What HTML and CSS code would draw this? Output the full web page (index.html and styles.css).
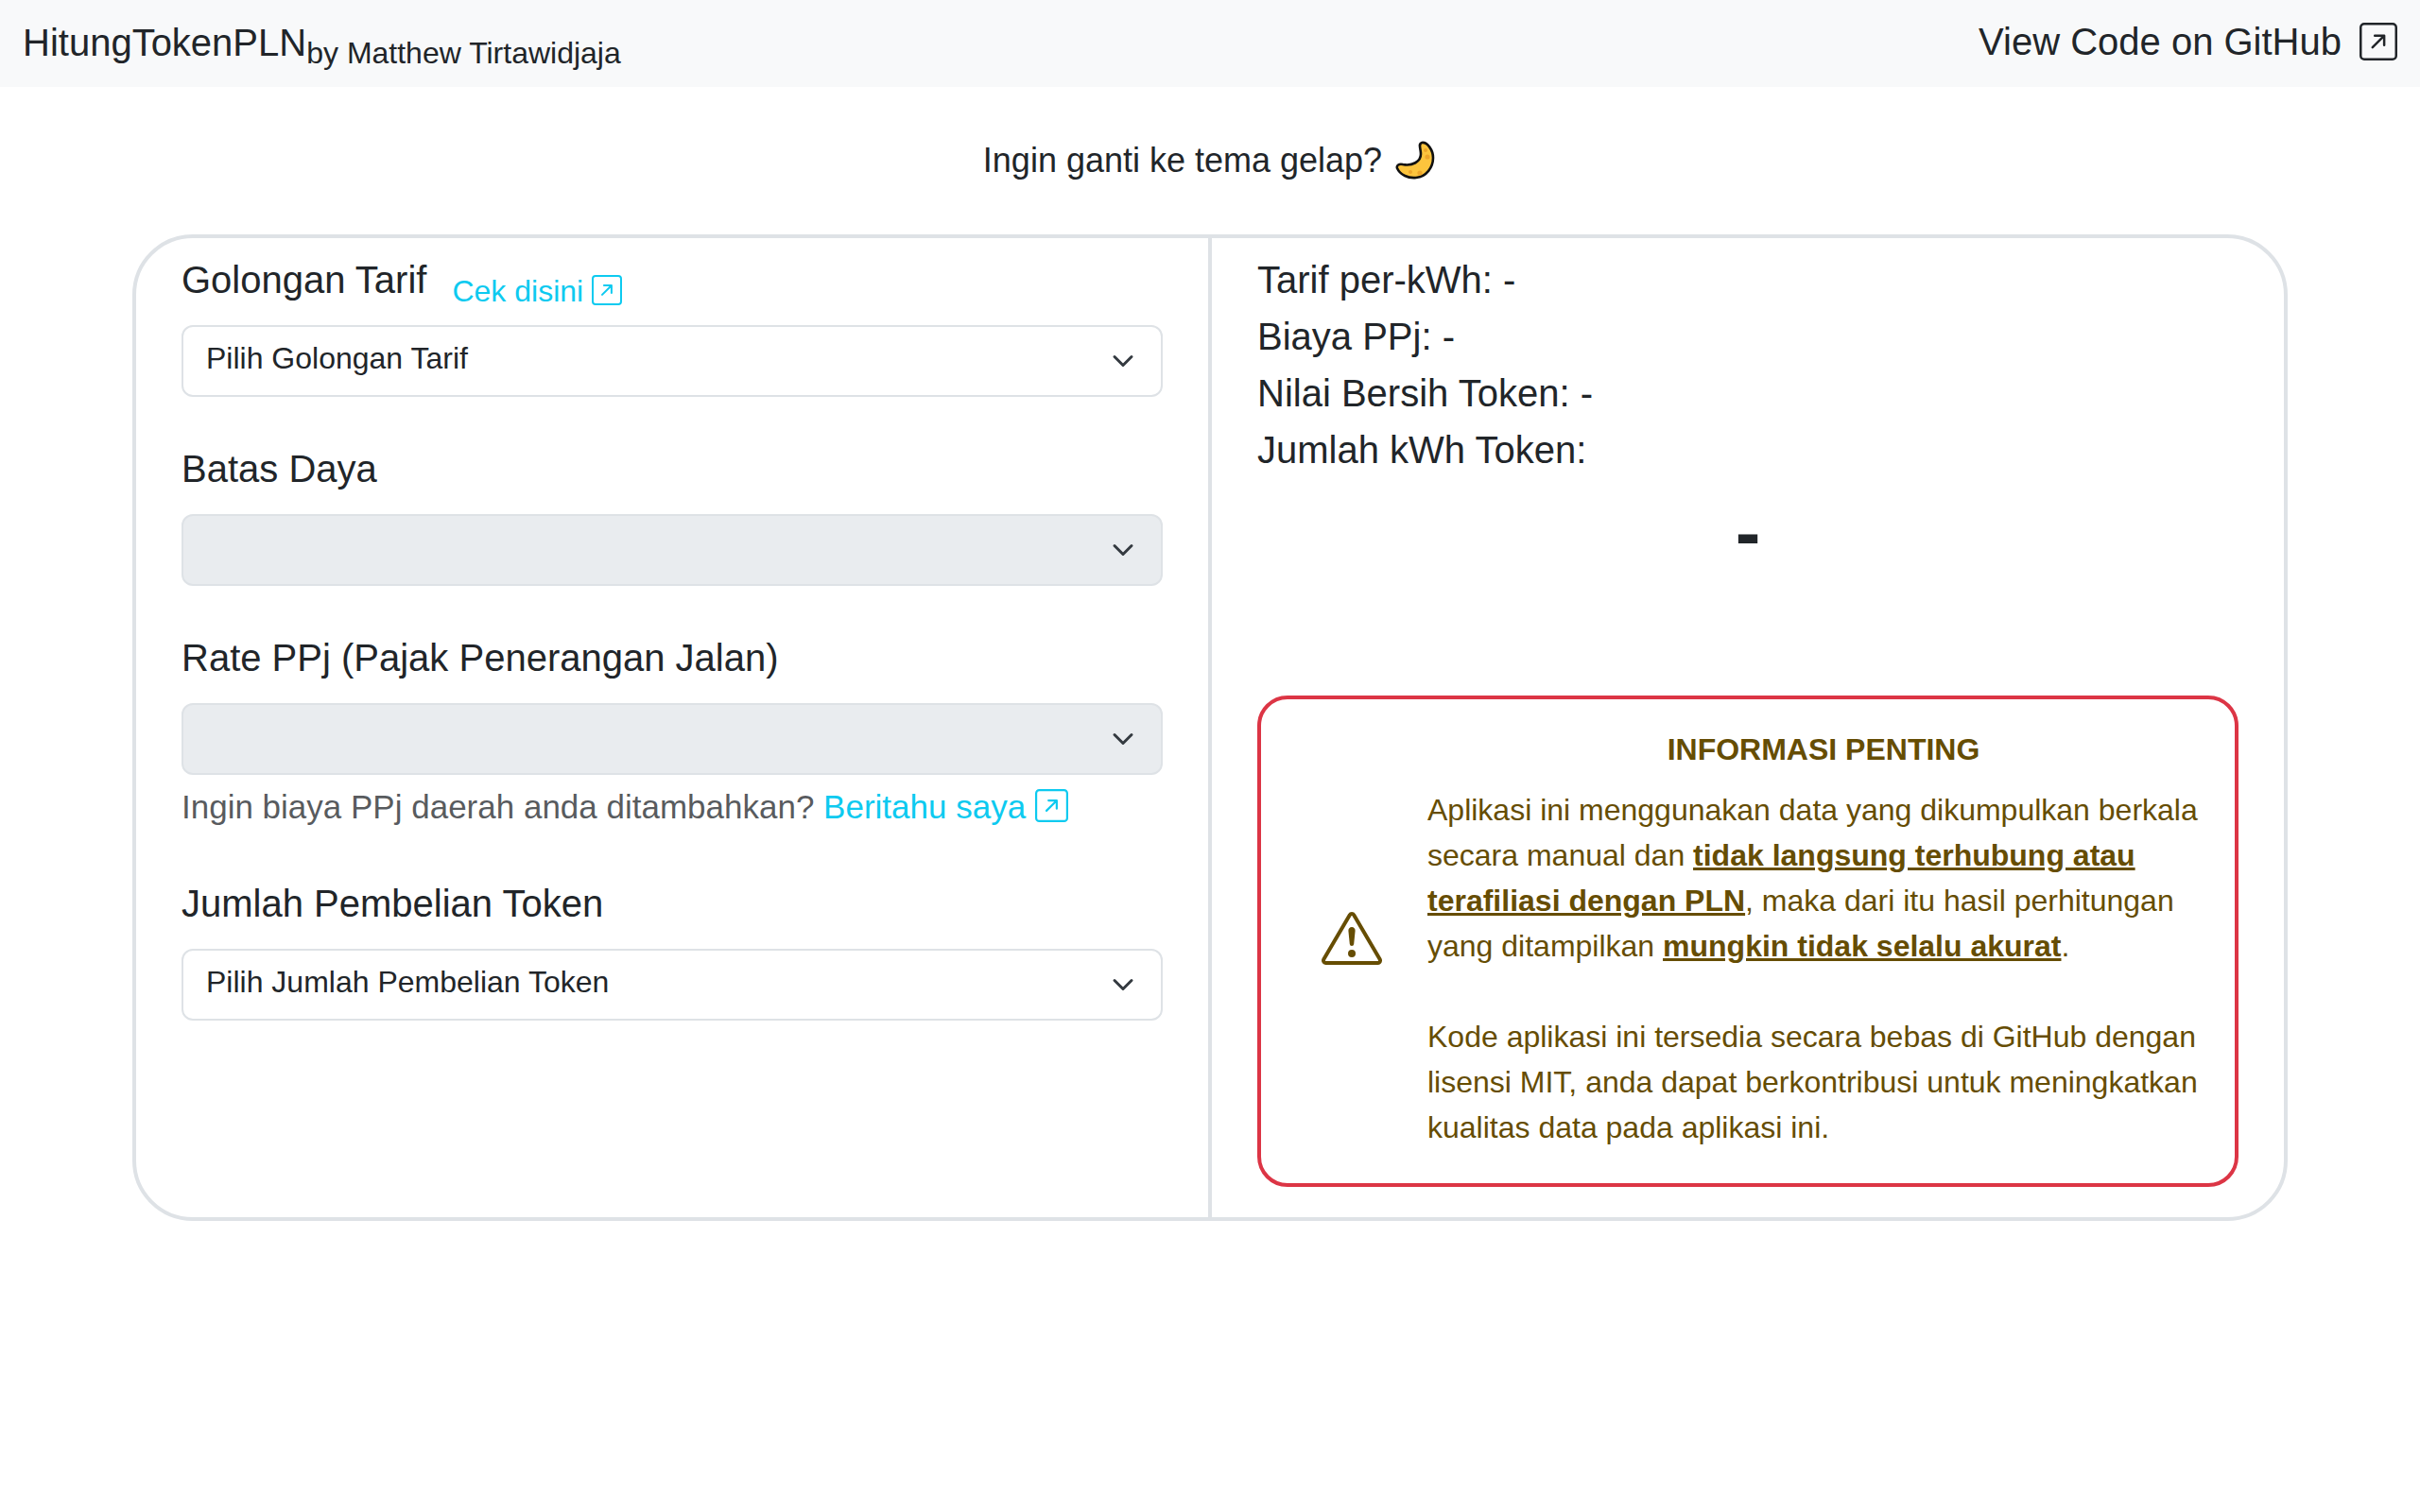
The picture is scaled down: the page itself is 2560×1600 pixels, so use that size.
FILE: index.html
```html
<!DOCTYPE html>
<html lang="id">
<head>
    <meta charset="UTF-8">
    <meta name="viewport" content="width=device-width, initial-scale=1.0">
    <title>HitungTokenPLN</title>
    <link rel="stylesheet" href="styles.css">
</head>
<body>
    <nav class="navbar">
        <div class="brand">HitungTokenPLN<small class="brand-by">by Matthew Tirtawidjaja</small></div>
        <a class="repo-link" href="#"><span class="repo-text">View Code on GitHub</span>
            <svg class="repo-icon" viewBox="0 0 16 16" fill="currentColor"><path fill-rule="evenodd" d="M15 2a1 1 0 0 0-1-1H2a1 1 0 0 0-1 1v12a1 1 0 0 0 1 1h12a1 1 0 0 0 1-1V2zM0 2a2 2 0 0 1 2-2h12a2 2 0 0 1 2 2v12a2 2 0 0 1-2 2H2a2 2 0 0 1-2-2V2zm5.854 8.803a.5.5 0 1 1-.708-.707L9.243 6H6.475a.5.5 0 1 1 0-1h3.975a.5.5 0 0 1 .5.5v3.975a.5.5 0 1 1-1 0V6.707l-4.096 4.096z"/></svg>
        </a>
    </nav>

    <p class="theme-toggle">Ingin ganti ke tema gelap?
        <svg class="moon" viewBox="0 0 42 42"><path d="M28 2C24 3 27 8 27 14C27 22 18 27 8 25C4 24 1 26 2 29C5 36 14 40 22 39C33 38 40 28 40 18C40 10 34 1 28 2Z" fill="#fcc43d" stroke="#111" stroke-width="2.6" stroke-linejoin="round"/><circle cx="32" cy="10" r="2" fill="#eda52a"/><circle cx="34" cy="17" r="2.6" fill="#eda52a"/><circle cx="16" cy="33" r="2" fill="#eda52a"/><circle cx="26" cy="34" r="2.6" fill="#eda52a"/></svg>
    </p>

    <main class="calc">
        <section class="calc-form">
            <div class="field">
                <div class="label-row">
                    <label class="field-label">Golongan Tarif</label>
                    <a class="ext-link" href="#">Cek disini
                        <svg class="ext-icon" viewBox="0 0 16 16" fill="currentColor"><path fill-rule="evenodd" d="M15 2a1 1 0 0 0-1-1H2a1 1 0 0 0-1 1v12a1 1 0 0 0 1 1h12a1 1 0 0 0 1-1V2zM0 2a2 2 0 0 1 2-2h12a2 2 0 0 1 2 2v12a2 2 0 0 1-2 2H2a2 2 0 0 1-2-2V2zm5.854 8.803a.5.5 0 1 1-.708-.707L9.243 6H6.475a.5.5 0 1 1 0-1h3.975a.5.5 0 0 1 .5.5v3.975a.5.5 0 1 1-1 0V6.707l-4.096 4.096z"/></svg>
                    </a>
                </div>
                <select class="field-select"><option>Pilih Golongan Tarif</option></select>
            </div>
            <div class="field">
                <label class="field-label">Batas Daya</label>
                <select class="field-select" disabled><option></option></select>
            </div>
            <div class="field">
                <label class="field-label">Rate PPj (Pajak Penerangan Jalan)</label>
                <select class="field-select" disabled><option></option></select>
                <p class="field-help">Ingin biaya PPj daerah anda ditambahkan?
                    <a class="ext-link" href="#">Beritahu saya
                        <svg class="ext-icon" viewBox="0 0 16 16" fill="currentColor"><path fill-rule="evenodd" d="M15 2a1 1 0 0 0-1-1H2a1 1 0 0 0-1 1v12a1 1 0 0 0 1 1h12a1 1 0 0 0 1-1V2zM0 2a2 2 0 0 1 2-2h12a2 2 0 0 1 2 2v12a2 2 0 0 1-2 2H2a2 2 0 0 1-2-2V2zm5.854 8.803a.5.5 0 1 1-.708-.707L9.243 6H6.475a.5.5 0 1 1 0-1h3.975a.5.5 0 0 1 .5.5v3.975a.5.5 0 1 1-1 0V6.707l-4.096 4.096z"/></svg>
                    </a>
                </p>
            </div>
            <div class="field">
                <label class="field-label">Jumlah Pembelian Token</label>
                <select class="field-select"><option>Pilih Jumlah Pembelian Token</option></select>
            </div>
        </section>

        <div class="calc-divider"></div>

        <section class="calc-result">
            <div class="result-lines">
                <div>Tarif per-kWh: -</div>
                <div>Biaya PPj: -</div>
                <div>Nilai Bersih Token: -</div>
                <div>Jumlah kWh Token:</div>
            </div>
            <div class="result-total">-</div>

            <div class="notice">
                <svg class="notice-icon" viewBox="0 0 16 16" fill="currentColor"><path d="M7.938 2.016A.13.13 0 0 1 8.002 2a.13.13 0 0 1 .063.016.146.146 0 0 1 .054.057l6.857 11.667c.036.06.035.124.002.183a.163.163 0 0 1-.054.06.116.116 0 0 1-.066.017H1.146a.115.115 0 0 1-.066-.017.163.163 0 0 1-.054-.06.176.176 0 0 1 .002-.183L7.884 2.073a.147.147 0 0 1 .054-.057zm1.044-.45a1.13 1.13 0 0 0-1.96 0L.165 13.233c-.457.778.091 1.767.98 1.767h13.713c.889 0 1.438-.99.98-1.767L8.982 1.566z"/><path d="M7.002 12a1 1 0 1 1 2 0 1 1 0 0 1-2 0zM7.1 5.995a.905.905 0 1 1 1.8 0l-.35 3.507a.552.552 0 0 1-1.1 0L7.1 5.995z"/></svg>
                <div class="notice-body">
                    <h2 class="notice-title">INFORMASI PENTING</h2>
                    <p class="notice-text">Aplikasi ini menggunakan data yang dikumpulkan berkala secara manual dan <strong>tidak langsung terhubung atau terafiliasi dengan PLN</strong>, maka dari itu hasil perhitungan yang ditampilkan <strong>mungkin tidak selalu akurat</strong>.</p>
                    <p class="notice-text">Kode aplikasi ini tersedia secara bebas di GitHub dengan lisensi MIT, anda dapat berkontribusi untuk meningkatkan kualitas data pada aplikasi ini.</p>
                </div>
            </div>
        </section>
    </main>
</body>
</html>
```

FILE: styles.css
```css
body {
    margin: 0;
    font-family: "Liberation Sans", Arial, sans-serif;
    font-size: 32px;
    line-height: 48px;
    color: #212529;
    background: #fff;
}
a {
    text-decoration: none;
}

.navbar {
    display: flex;
    justify-content: space-between;
    align-items: center;
    height: 92px;
    padding: 0 24px;
    box-sizing: border-box;
    background-color: #f8f9fa;
}
.brand {
    font-size: 40px;
    line-height: 60px;
}
.brand-by {
    font-size: 32px;
    position: relative;
    top: 8px;
}
.repo-link {
    display: flex;
    align-items: center;
    gap: 19px;
    margin-bottom: 5px;
    font-size: 40px;
    color: #212529;
}
.repo-icon {
    width: 40px;
    height: 40px;
}

.theme-toggle {
    display: flex;
    justify-content: center;
    align-items: center;
    gap: 14px;
    margin: 51px 0;
    font-size: 36px;
    line-height: 54px;
}
.moon {
    width: 42px;
    height: 42px;
    margin-right: 2px;
}

.calc {
    display: grid;
    grid-template-columns: 1fr 4px 1fr;
    width: 2280px;
    height: 1044px;
    margin: 0 auto;
    box-sizing: border-box;
    border: 4px solid #dee2e6;
    border-radius: 64px;
}
.calc-divider {
    background-color: #dee2e6;
}
.calc-form, .calc-result {
    padding: 14px 48px 0;
}

.field {
    margin-bottom: 46px;
}
.label-row {
    display: flex;
    align-items: flex-end;
    gap: 27px;
}
.field-label {
    display: block;
    font-size: 40px;
    line-height: 60px;
    margin-bottom: 18px;
}
.label-row .ext-link {
    margin-bottom: 12px;
}
.field-select {
    display: block;
    width: 100%;
    height: 76px;
    padding: 9px 72px 15px 24px;
    font-family: inherit;
    font-size: 32px;
    line-height: 48px;
    color: #212529;
    background-color: #fff;
    background-image: url("data:image/svg+xml,%3csvg xmlns='http://www.w3.org/2000/svg' viewBox='0 0 16 16'%3e%3cpath fill='none' stroke='%23343a40' stroke-linecap='round' stroke-linejoin='round' stroke-width='2' d='m2 5 6 6 6-6'/%3e%3c/svg%3e");
    background-repeat: no-repeat;
    background-position: right 24px center;
    background-size: 32px 24px;
    border: 2px solid #dee2e6;
    border-radius: 12px;
    appearance: none;
}
.field-select:disabled {
    background-color: #e9ecef;
    opacity: 1;
}
.field-help {
    margin: 8px 0 0;
    font-size: 35px;
    line-height: 52px;
    color: rgba(33, 37, 41, 0.75);
}
.ext-link {
    color: #0dcaf0;
}
.ext-icon {
    width: 1em;
    height: 1em;
    vertical-align: -0.125em;
}

.result-lines {
    font-size: 40px;
    line-height: 60px;
}
.result-total {
    margin-top: 4px;
    font-size: 80px;
    line-height: 108px;
    font-weight: bold;
    text-align: center;
}
.notice {
    display: flex;
    align-items: center;
    margin-top: 118px;
    padding: 29px 16px 35px 64px;
    border: 4px solid #dc3545;
    border-radius: 32px;
    color: #664d03;
}
.notice-icon {
    flex: none;
    width: 64px;
    height: 64px;
    margin-right: 48px;
}
.notice-title {
    margin: 0 0 16px;
    font-size: 32px;
    line-height: 48px;
    text-align: center;
}
.notice-text {
    margin: 0 0 48px;
}
.notice-text:last-child {
    margin-bottom: 0;
}
.notice-text strong {
    text-decoration: underline;
}
```
